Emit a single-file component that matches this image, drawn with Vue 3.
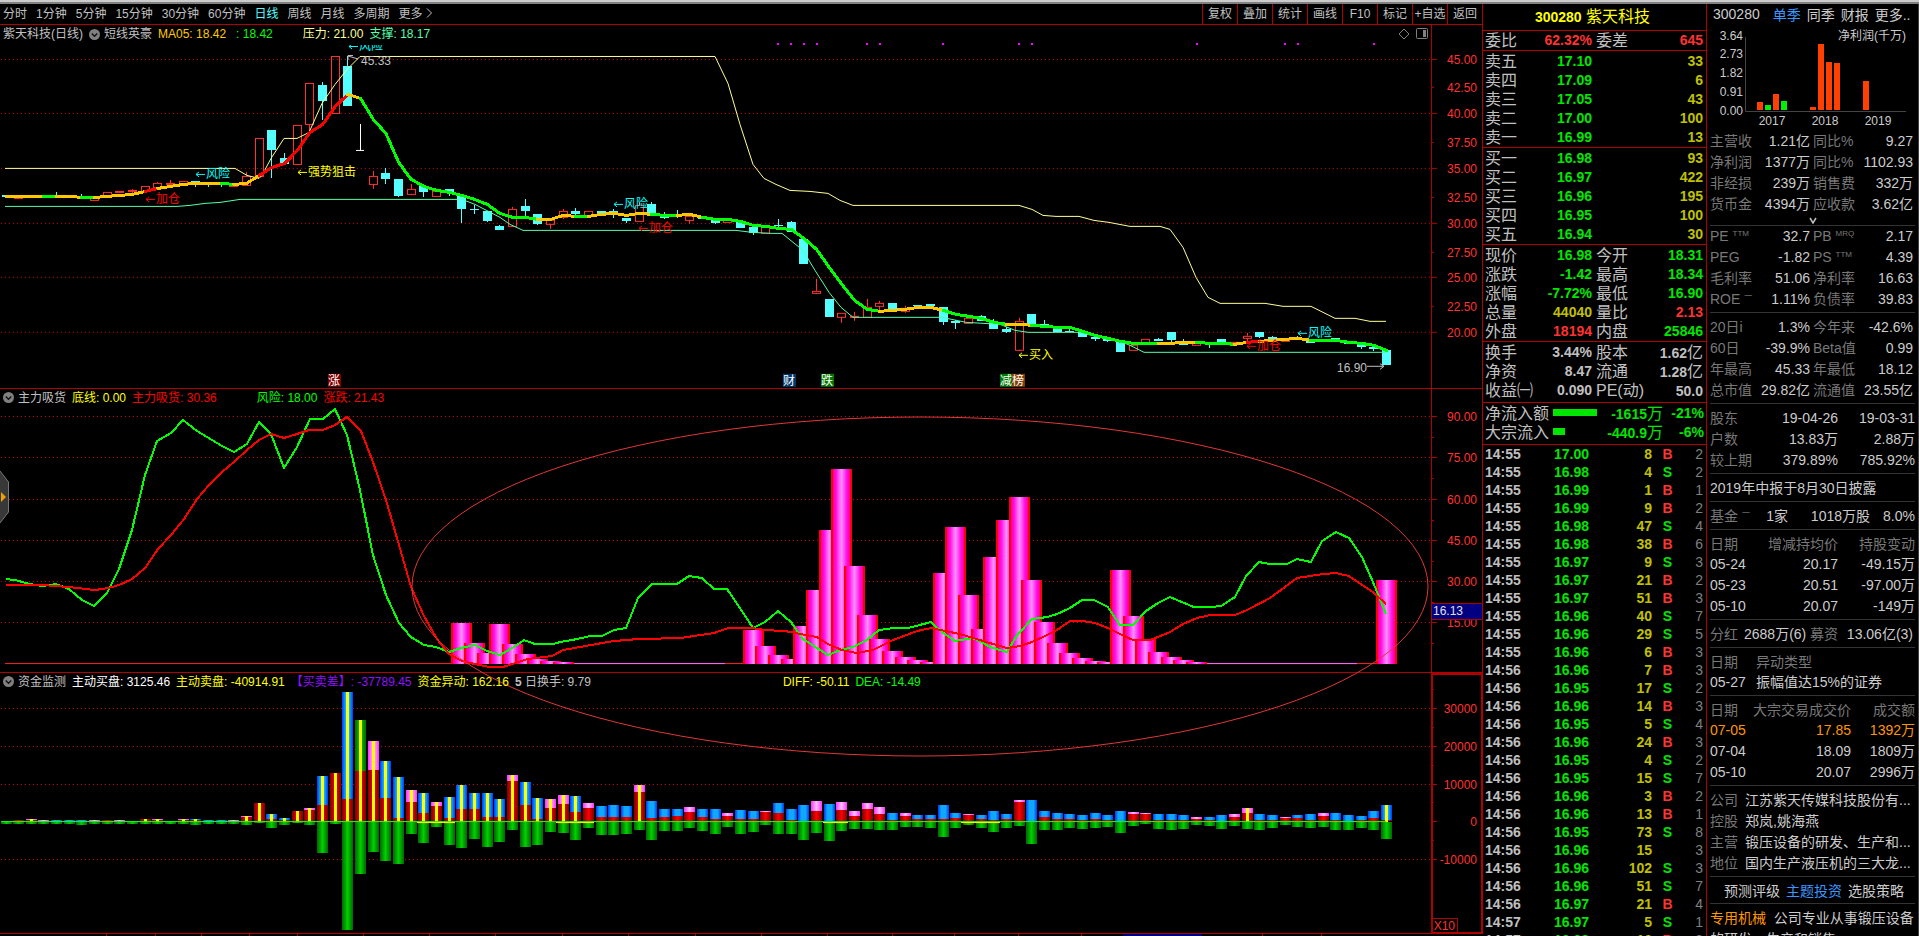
<script setup>
const periods = ['分时', '1分钟', '5分钟', '15分钟', '30分钟', '60分钟', '日线', '周线', '月线', '多周期']
const tools = ['复权', '叠加', '统计', '画线', 'F10', '标记', '+自选', '返回']

const px = (i) => 6 + 12.665 * i

// Candles: index, kind (u = rising, d = falling), body top, body bottom, wick top, wick bottom
const candles = [
  [0, 'd', 195, 197], [1, 'u', 196, 198, 196, 199], [4, 'd', 196, 197, 192, 197], [6, 'd', 196, 198, 194, 198],
  [7, 'u', 197, 200], [8, 'u', 192, 196], [9, 'u', 191, 192], [10, 'u', 190, 191, 189, 194], [11, 'u', 186, 191],
  [12, 'u', 183, 187, 182, 187], [13, 'u', 183, 184, 180, 187], [14, 'u', 181, 184], [15, 'd', 181, 183, 181, 187],
  [16, 'd', 182, 184, 182, 187], [17, 'd', 182, 184, 182, 187], [18, 'u', 185, 186], [19, 'u', 176, 185, 172, 185],
  [20, 'u', 138, 176], [21, 'd', 130, 150, 130, 178], [22, 'd', 158, 164, 153, 164], [23, 'u', 125, 164],
  [24, 'u', 83, 124, 83, 133], [25, 'd', 85, 101, 82, 120], [26, 'u', 56, 113], [27, 'd', 66, 106, 56, 106],
  [29, 'u', 176, 184, 171, 189], [30, 'd', 173, 179, 168, 184], [31, 'd', 179, 196, 179, 197], [32, 'u', 189, 194, 184, 195],
  [33, 'd', 186, 192, 186, 197], [34, 'u', 191, 196], [35, 'd', 189, 193, 189, 196], [36, 'd', 196, 209, 196, 223],
  [37, 'd', 209, 210, 205, 214], [38, 'd', 211, 221, 211, 222], [39, 'd', 226, 230, 225, 230], [40, 'u', 209, 226, 207, 227],
  [41, 'd', 206, 211, 199, 216], [42, 'd', 214, 224, 214, 225], [43, 'u', 220, 224, 220, 229], [44, 'u', 211, 217, 209, 219],
  [45, 'd', 211, 214, 208, 216], [46, 'u', 211, 216], [47, 'd', 211, 214], [48, 'd', 211, 215, 209, 218],
  [49, 'd', 218, 221, 218, 223], [50, 'u', 205, 221, 202, 221], [51, 'd', 204, 214, 202, 214], [52, 'd', 216, 218, 212, 219],
  [53, 'd', 215, 216, 210, 218], [54, 'u', 216, 220, 216, 224], [55, 'd', 217, 219], [56, 'd', 219, 223, 219, 224],
  [57, 'u', 220, 222], [58, 'd', 222, 228], [59, 'd', 227, 233, 227, 235], [60, 'u', 227, 233], [61, 'd', 225, 226, 219, 228],
  [62, 'd', 222, 232, 221, 232], [63, 'd', 239, 264], [64, 'u', 291, 293, 279, 294], [65, 'd', 299, 317],
  [66, 'u', 313, 317, 313, 323], [67, 'u', 316, 317, 312, 321], [68, 'u', 307, 317, 299, 317], [69, 'u', 303, 306, 301, 312],
  [70, 'd', 303, 310], [71, 'u', 308, 311, 306, 313], [72, 'd', 305, 306], [73, 'd', 304, 306], [74, 'd', 307, 322, 307, 325],
  [75, 'd', 321, 323, 320, 329], [76, 'u', 318, 323, 317, 323], [77, 'd', 316, 321, 315, 321], [78, 'd', 323, 329, 319, 329],
  [79, 'd', 329, 332, 327, 333], [80, 'u', 321, 350, 318, 351], [81, 'd', 314, 324], [82, 'd', 324, 326, 320, 326],
  [83, 'd', 329, 332], [84, 'd', 331, 332, 329, 332], [85, 'd', 332, 337], [86, 'd', 337, 339, 336, 341],
  [87, 'd', 339, 341, 338, 342], [88, 'd', 341, 352], [89, 'u', 345, 350], [90, 'u', 339, 343], [91, 'd', 339, 341, 338, 341],
  [92, 'd', 332, 340, 332, 342], [93, 'd', 341, 345, 339, 345], [94, 'u', 343, 345], [95, 'd', 343, 345, 343, 348],
  [96, 'd', 339, 343], [97, 'u', 342, 343], [98, 'u', 336, 338, 333, 342], [99, 'd', 332, 337, 332, 338],
  [100, 'd', 337, 340, 336, 340], [101, 'u', 340, 341], [102, 'd', 338, 339, 336, 340], [103, 'd', 340, 343],
  [105, 'd', 338, 341], [106, 'd', 341, 344], [107, 'd', 345, 347, 343, 349], [108, 'd', 347, 349, 345, 351],
  [109, 'd', 350, 365, 350, 365],
].map(([i, k, t, b, wt, wb]) => ({
  i, k, t, b, x: Math.floor(px(i)), wt: wt ?? t, wb: wb ?? b,
}))

const ma = [
  196, 196, 196, 196, 196, 196, 197, 197, 196, 195, 194, 191, 188, 186, 184, 183, 183, 183, 184, 183, 175, 167, 163, 150,
  132, 124, 106, 94, 98, 119, 133, 162, 179, 186, 190, 192, 195, 199, 204, 213, 217, 217, 219, 219, 215, 216, 216, 214,
  213, 215, 213, 214, 215, 215, 214, 217, 219, 219, 221, 225, 226, 228, 229, 238, 249, 267, 284, 300, 309, 311, 310, 309,
  307, 307, 310, 314, 316, 318, 322, 324, 324, 325, 326, 327, 327, 331, 335, 338, 341, 343, 343, 343, 343, 342, 342, 343,
  343, 344, 342, 341, 340, 339, 338, 340, 340, 340, 342, 343, 345, 350,
]
const maParts = [
  ['y', 0, 3], ['g', 3, 4], ['y', 4, 6], ['g', 6, 7], ['y', 7, 11], ['r', 11, 12], ['y', 12, 17], ['g', 17, 18],
  ['y', 18, 20], ['r', 20, 27], ['y', 27, 28], ['g', 28, 42], ['y', 42, 45], ['g', 45, 46], ['y', 46, 51], ['g', 51, 53],
  ['y', 53, 55], ['g', 55, 69], ['y', 69, 74], ['g', 74, 79], ['y', 79, 81], ['g', 81, 91], ['y', 91, 94], ['g', 94, 97],
  ['y', 97, 98], ['r', 98, 99], ['y', 99, 103], ['g', 103, 109],
].map(([c, a, b]) => ({
  c,
  pts: ma.slice(a, b + 1).map((y, n) => `${px(a + n)},${y + 0.5}`).join(' '),
}))

const pressure = '5,168 235,168 247,175 259,178 262,175 271,158 284,138 297,138 309,132 322,103 335,84 347,69 360,56 715,56 728,83 740,124 753,164 764,178 776,184 790,190 810,191 828,193 840,200 853,205 1019,205 1032,209 1043,215 1056,216 1079,216 1094,220 1109,222 1130,226 1160,226 1170,229 1183,247 1196,277 1208,297 1220,303 1265,303 1283,306 1311,306 1335,318 1355,318 1370,321 1386,321'
const support = '5,206 177,206 190,205 205,203 220,202 240,199 462,199 475,204 500,217 510,224 523,230 736,230 752,232 772,233 782,233 803,250 815,270 829,292 841,307 853,317 942,317 966,322 1000,324 1015,330 1028,332 1080,332 1095,336 1120,341 1130,345 1144,352 1386,352'
const signals = [777, 790, 803, 816, 866, 879, 942, 1018, 1031, 1196, 1284, 1297, 1373]
const axis1 = [[45, 59], [42.5, 87], [40, 113], [37.5, 142], [35, 168], [32.5, 197], [30, 223], [27.5, 252], [25, 277], [22.5, 306], [20, 332]]
const notes = [
  ['cyan', 195, 174, '风险'], ['pureRed', 145, 199, '加仓'], ['yellow', 297, 172, '强势狙击'],
  ['cyan', 613, 204, '风险'], ['pureRed', 638, 228, '加仓'], ['yellow', 1018, 355, '买入'],
  ['cyan', 1297, 333, '风险'], ['pureRed', 1246, 346, '加仓'],
]
const tags = [
  ['涨', 328, '#800000'], ['财', 783, '#003870'], ['跌', 821, '#007800'], ['减', 1000, '#007800'], ['榜', 1012, '#803c00'],
]

const axis2 = [[90, 416], [75, 457], [60, 499], [45, 540], [30, 581], [15, 622]]
const risk = '6,579 15,580 30,584 42,586 56,584 69,589 82,600 94,606 107,593 119,569 132,530 145,475 157,441 171,433 183,420 197,431 222,446 234,452 247,444 259,422 271,434 284,468 297,447 310,419 323,419 335,409 347,435 360,490 373,555 386,595 399,623 411,637 424,645 436,647 449,652 461,648 475,645 487,651 500,655 512,648 524,640 535,644 553,644 560,642 577,639 590,636 602,636 614,630 626,628 638,598 652,584 677,584 689,576 702,578 714,589 727,589 740,608 753,628 765,622 778,611 791,622 803,639 828,655 840,650 853,647 867,640 879,630 893,628 908,628 931,622 942,632 955,641 972,638 980,641 990,647 1007,652 1017,635 1032,619 1047,617 1057,614 1070,608 1082,600 1094,600 1108,607 1120,625 1133,625 1146,611 1158,603 1170,597 1194,607 1210,607 1221,606 1235,597 1246,576 1259,562 1270,564 1287,564 1297,559 1311,562 1322,541 1336,532 1349,538 1362,557 1373,582 1386,614'
const trend = '6,585 43,585 69,587 95,590 108,588 119,585 132,579 145,568 158,549 171,535 184,519 197,499 209,485 222,472 235,461 247,450 259,440 271,434 284,438 297,434 309,430 323,430 335,425 347,417 361,431 373,462 386,500 399,545 411,587 424,616 437,639 449,654 462,661 475,664 490,667 503,667 512,664 527,659 552,656 563,650 602,643 614,641 638,639 680,638 714,633 728,628 752,628 765,630 785,631 817,637 828,644 842,650 857,653 873,650 893,640 917,631 931,628 960,634 980,640 1007,648 1020,646 1032,642 1045,636 1057,630 1070,621 1083,621 1095,623 1108,628 1120,634 1133,640 1150,640 1170,632 1183,624 1197,618 1210,615 1235,615 1247,610 1270,598 1297,578 1323,574 1336,573 1349,576 1373,592 1386,604'
const inflow = [
  [36, 623], [37, 643], [38, 653], [39, 624], [40, 644], [41, 654], [42, 659], [43, 661], [44, 662],
  [59, 630], [60, 646], [61, 655], [62, 659], [63, 626], [64, 590], [65, 530], [66, 469], [67, 566], [68, 615], [69, 639],
  [70, 651], [71, 657], [72, 660], [73, 662], [74, 573], [75, 527], [76, 595], [77, 629], [78, 557], [79, 520], [80, 497],
  [81, 580], [82, 622], [83, 643], [84, 653], [85, 658], [86, 661], [87, 662], [88, 570], [89, 616], [90, 639], [91, 652],
  [92, 657], [93, 660], [94, 662], [109, 580],
]

const axis3 = [['30000', 708], ['20000', 746], ['10000', 784], ['0', 821], ['-10000', 859]]
// Money flow: top of bar, top of red part, upper colour, bottom of green part, yellow stripe
const flow = [
  [821, 821, 'b', 823], [820, 820, 'r', 823], [819, 820, 'p', 823, 1], [820, 821, 'p', 823], [820, 821, 'b', 823],
  [820, 821, 'b', 823], [820, 821, 'b', 824], [820, 821, 'p', 823], [820, 820, 'r', 823], [820, 821, 'p', 823],
  [821, 821, 'b', 823], [819, 819, 'r', 823, 1], [819, 820, 'p', 823, 1], [821, 821, 'b', 823], [819, 820, 'p', 823, 1],
  [819, 820, 'b', 824, 1], [820, 821, 'b', 823], [820, 821, 'b', 823], [820, 821, 'p', 823], [816, 817, 'p', 824, 1],
  [803, 803, 'r', 822, 1], [814, 819, 'b', 827, 1], [818, 820, 'b', 824, 1], [811, 811, 'r', 822, 1], [808, 810, 'p', 824, 1],
  [776, 805, 'b', 852, 1], [773, 773, 'r', 823, 1], [692, 799, 'b', 929, 1], [720, 771, 'g', 873, 1], [741, 770, 'p', 851, 1],
  [761, 798, 'b', 860, 1], [777, 818, 'b', 863, 1], [790, 802, 'p', 833, 1], [793, 813, 'b', 842, 1], [802, 806, 'p', 826, 1],
  [797, 818, 'b', 844, 1], [785, 809, 'b', 847, 1], [793, 809, 'b', 838, 1], [793, 817, 'b', 846, 1], [799, 817, 'b', 841, 1],
  [775, 781, 'p', 829, 1], [782, 805, 'b', 846, 1], [798, 819, 'b', 844, 1], [799, 808, 'p', 831, 1], [795, 804, 'p', 832, 1],
  [796, 812, 'b', 839, 1], [803, 808, 'p', 827], [806, 817, 'b', 834], [805, 817, 'b', 834], [806, 817, 'b', 833],
  [785, 792, 'p', 829, 1], [801, 818, 'b', 839], [809, 817, 'b', 830], [809, 816, 'b', 830], [807, 812, 'p', 827],
  [809, 817, 'b', 830], [809, 819, 'b', 833], [813, 816, 'p', 826], [810, 819, 'b', 833], [811, 819, 'b', 831],
  [811, 812, 'p', 824], [803, 813, 'b', 833], [809, 820, 'b', 833], [805, 821, 'b', 839], [801, 811, 'p', 832],
  [804, 821, 'b', 840], [802, 810, 'p', 830], [811, 816, 'p', 828], [803, 809, 'p', 828], [807, 814, 'p', 829],
  [813, 820, 'b', 829], [813, 816, 'p', 826], [815, 819, 'b', 826], [815, 819, 'b', 827], [805, 819, 'b', 836],
  [813, 818, 'b', 827], [814, 815, 'p', 824], [815, 819, 'b', 827], [811, 820, 'b', 831], [814, 819, 'b', 827],
  [800, 802, 'p', 825], [800, 821, 'b', 843], [811, 817, 'b', 829], [813, 819, 'b', 829], [814, 819, 'b', 827],
  [815, 820, 'b', 828], [813, 819, 'b', 827], [815, 820, 'b', 826], [811, 821, 'b', 832], [812, 814, 'p', 825],
  [813, 814, 'p', 823], [814, 820, 'b', 828], [814, 820, 'b', 829], [815, 820, 'b', 828], [817, 819, 'p', 824],
  [817, 820, 'b', 825], [815, 821, 'b', 828], [814, 817, 'p', 825], [808, 813, 'p', 828, 1], [814, 820, 'b', 829],
  [815, 820, 'b', 827], [817, 818, 'p', 824], [815, 818, 'b', 826], [814, 820, 'b', 827], [813, 816, 'p', 826],
  [813, 820, 'b', 829], [815, 821, 'b', 829], [816, 820, 'b', 827], [811, 818, 'b', 829], [805, 820, 'b', 838, 1],
].map(([top, mid, kind, bottom, stripe], i) => ({ x: Math.floor(px(i)) - 5, top, mid, kind, bottom, stripe }))
const warnings = [[417, 455], [556, 594], [823, 848], [961, 1000]]
const footTicks = [106, 155, 201, 249, 297, 363, 429, 495, 562, 628, 695, 761, 827, 892, 954, 1018, 1081, 1262, 1321]

const sells = [['卖五', '17.10', 33], ['卖四', '17.09', 6], ['卖三', '17.05', 43], ['卖二', '17.00', 100], ['卖一', '16.99', 13]]
const buys = [['买一', '16.98', 93], ['买二', '16.97', 422], ['买三', '16.96', 195], ['买四', '16.95', 100], ['买五', '16.94', 30]]
const quotes = [
  ['现价', '16.98', 'green', '今开', '18.31', 'green'],
  ['涨跌', '-1.42', 'green', '最高', '18.34', 'green'],
  ['涨幅', '-7.72%', 'green', '最低', '16.90', 'green'],
  ['总量', '44040', 'olive', '量比', '2.13', 'red'],
  ['外盘', '18194', 'red', '内盘', '25846', 'green'],
]
const shares = [['换手', '3.44%', '股本', '1.62', '亿'], ['净资', '8.47', '流通', '1.28', '亿'], ['收益㈠', '0.090', 'PE(动)', '50.0', '']]
const netFlow = [['净流入额', 44, '-1615', '-21%'], ['大宗流入', 12, '-440.9', '-6%']]
const ticks = [
  ['14:55', '17.00', 8, 'B', 2], ['14:55', '16.98', 4, 'S', 2], ['14:55', '16.99', 1, 'B', 1], ['14:55', '16.99', 9, 'B', 2],
  ['14:55', '16.98', 47, 'S', 4], ['14:55', '16.98', 38, 'B', 6], ['14:55', '16.97', 9, 'S', 3], ['14:55', '16.97', 21, 'B', 2],
  ['14:55', '16.97', 51, 'B', 3], ['14:55', '16.96', 40, 'S', 7], ['14:55', '16.96', 29, 'S', 5], ['14:55', '16.96', 6, 'B', 3],
  ['14:56', '16.96', 7, 'B', 3], ['14:56', '16.95', 17, 'S', 2], ['14:56', '16.96', 14, 'B', 3], ['14:56', '16.95', 5, 'S', 4],
  ['14:56', '16.96', 24, 'B', 3], ['14:56', '16.95', 4, 'S', 2], ['14:56', '16.95', 15, 'S', 7], ['14:56', '16.96', 3, 'B', 2],
  ['14:56', '16.96', 13, 'B', 1], ['14:56', '16.95', 73, 'S', 8], ['14:56', '16.96', 15, '', 3], ['14:56', '16.96', 102, 'S', 3],
  ['14:56', '16.96', 51, 'S', 7], ['14:56', '16.97', 21, 'B', 4], ['14:57', '16.97', 5, 'S', 1], ['14:57', '16.98', 10, 'B', 3],
]

const profitAxis = [['3.64', 36], ['2.73', 54], ['1.82', 73], ['0.91', 92], ['0.00', 111]]
const profitBars = [
  [1757, 102, 'o'], [1765, 105, 'g'], [1773, 94, 'o'], [1781, 101, 'g'],
  [1810, 107, 'o'], [1818, 44, 'o'], [1826, 62, 'o'], [1834, 63, 'o'], [1863, 81, 'o'],
]
const finance = [
  ['主营收', '1.21亿', '同比%', '9.27'], ['净利润', '1377万', '同比%', '1102.93'],
  ['非经损', '239万', '销售费', '332万'], ['货币金', '4394万', '应收款', '3.62亿'],
]
const ratios = [
  ['PE', '32.7', 'PB', '2.17', 'TTM', 'MRQ'], ['PEG', '-1.82', 'PS', '4.39', '', 'TTM'],
  ['毛利率', '51.06', '净利率', '16.63'], ['ROE', '1.11%', '负债率', '39.83', '一'],
]
const range = [
  ['20日i', '1.3%', '今年来', '-42.6%'], ['60日', '-39.9%', 'Beta值', '0.99'],
  ['年最高', '45.33', '年最低', '18.12'], ['总市值', '29.82亿', '流通值', '23.55亿'],
]
const holders = [['股东', '19-04-26', '19-03-31'], ['户数', '13.83万', '2.88万'], ['较上期', '379.89%', '785.92%']]
const changes = [['05-24', '20.17', '-49.15万'], ['05-23', '20.51', '-97.00万'], ['05-10', '20.07', '-149万']]
const blocks = [['07-05', '17.85', '1392万'], ['07-04', '18.09', '1809万'], ['05-10', '20.07', '2996万']]
const company = [
  ['公司', '江苏紫天传媒科技股份有...'], ['控股', '郑岚,姚海燕'],
  ['主营', '锻压设备的研发、生产和...'], ['地位', '国内生产液压机的三大龙...'],
]
</script>

<template>
  <div class="app">
    <div class="strip"></div>
    <div class="body">
      <main class="left">
        <nav class="toolbar">
          <div class="periods">
            <button v-for="p in periods" :key="p" :class="{ active: p === '日线' }">{{ p }}</button>
            <button class="more">更多
              <svg width="7" height="10" viewBox="0 0 7 10"><path d="M1 0.5 L5.5 5 L1 9.5" fill="none" stroke="#c0c0c0" /></svg>
            </button>
          </div>
          <div class="tools">
            <button v-for="t in tools" :key="t">{{ t }}</button>
          </div>
        </nav>

        <div class="charts">
          <section class="pane p1">
            <header class="legend">
              <span>紫天科技(日线)</span>
              <svg class="drop" viewBox="0 0 12 12"><circle cx="6" cy="6" r="6" fill="#808080" /><path d="M3 5 L6 8 L9 5" fill="none" stroke="#111" stroke-width="1.5" /></svg>
              <span>短线英豪</span>
              <span class="gold">MA05: 18.42</span>
              <span class="lime ml4">: 18.42</span>
              <span class="pale ml24">压力: 21.00</span>
              <span class="mint">支撑: 18.17</span>
              <svg class="corner" width="32" height="14" viewBox="0 0 32 14">
                <path d="M6 2 L11 7 L6 12 L1 7 Z" fill="none" stroke="#808080" />
                <rect x="18.5" y="1.5" width="11" height="10" rx="1" fill="none" stroke="#808080" />
                <rect x="25" y="3" width="3" height="7" fill="#808080" />
              </svg>
            </header>
            <svg class="plot" viewBox="0 25 1483 364" preserveAspectRatio="none">
              <g class="grid">
                <line v-for="n in [0, 2, 4, 6, 8, 10]" :key="n" x1="1" x2="1431" :y1="axis1[n][1] + 0.5" :y2="axis1[n][1] + 0.5" />
              </g>
              <g class="axis">
                <line x1="1431.5" x2="1431.5" y1="25" y2="389" />
                <line v-for="(a, n) in axis1" :key="n" x1="1432" :x2="n % 2 ? 1434 : 1437" :y1="a[1] + 0.5" :y2="a[1] + 0.5" />
                <text v-for="(a, n) in axis1" :key="'t' + n" x="1477" :y="a[1] + 5">{{ a[0].toFixed(2) }}</text>
              </g>
              <rect v-for="s in signals" :key="s" :x="s" y="43" width="2" height="2" fill="#ff00ff" shape-rendering="crispEdges" />
              <g v-for="c in candles" :key="c.i" :class="c.k" shape-rendering="crispEdges">
                <template v-if="c.k === 'd'">
                  <rect :x="c.x" :y="c.wt" width="1" :height="c.wb - c.wt" />
                  <rect :x="c.x - 4" :y="c.t" width="9" :height="c.b - c.t" />
                </template>
                <template v-else>
                  <line :x1="c.x + 0.5" :x2="c.x + 0.5" :y1="c.wt" :y2="c.t" />
                  <line :x1="c.x + 0.5" :x2="c.x + 0.5" :y1="c.b" :y2="c.wb" />
                  <rect :x="c.x - 3.5" :y="c.t + 0.5" width="8" :height="c.b - c.t" />
                </template>
              </g>
              <path d="M360.5 124 V150.5 M356 150.5 H364" stroke="#fff" fill="none" shape-rendering="crispEdges" />
              <polyline class="thin" :points="pressure" stroke="#ffff99" transform="translate(0 .5)" />
              <polyline class="thin" :points="support" stroke="#55ffaa" transform="translate(0 .5)" />
              <polyline v-for="(m, n) in maParts" :key="n" class="ma" :class="m.c" :points="m.pts" />
              <g v-for="(n, k) in notes" :key="'n' + k" class="note" :class="n[0]">
                <path :d="`M${n[1] + 10} ${n[2] + 0.5} h-9 M${n[1] + 4} ${n[2] - 2} l-3 2.5 l3 2.5`" />
                <text :x="n[1] + 11" :y="n[2] + 4">{{ n[3] }}</text>
              </g>
              <clipPath id="under-legend"><rect x="340" y="45" width="60" height="20" /></clipPath>
              <g class="note cyan" clip-path="url(#under-legend)">
                <path d="M358 46.5 h-9 M352 44 l-3 2.5 l3 2.5" />
                <text x="359" y="50">风险</text>
              </g>
              <g class="note grey">
                <path d="M358 59 L348 56 M348 60 V55.5 H353" />
                <text x="361" y="65">45.33</text>
                <path d="M1367 366.5 H1384 M1380 364 l4 2.5 l-4 3" />
                <text x="1337" y="372">16.90</text>
              </g>
              <g v-for="t in tags" :key="t[0]" class="tag">
                <rect :x="t[1]" y="374" width="13" height="13" :fill="t[2]" />
                <text :x="t[1]" y="385">{{ t[0] }}</text>
              </g>
            </svg>
          </section>

          <section class="pane p2">
            <header class="legend">
              <svg class="drop" viewBox="0 0 12 12"><circle cx="6" cy="6" r="6" fill="#808080" /><path d="M3 5 L6 8 L9 5" fill="none" stroke="#111" stroke-width="1.5" /></svg>
              <span>主力吸货</span>
              <span class="yellow">底线: 0.00</span>
              <span class="pureRed">主力吸货: 30.36</span>
              <span class="lime ml34">风险: 18.00</span>
              <span class="pureRed">涨跌: 21.43</span>
            </header>
            <svg class="plot" viewBox="0 389 1483 284" preserveAspectRatio="none">
              <defs>
                <linearGradient id="pinkBar">
                  <stop offset="0" stop-color="#ff0000" /><stop offset=".1" stop-color="#ff0000" />
                  <stop offset=".11" stop-color="#ff0099" /><stop offset=".25" stop-color="#ff10e8" />
                  <stop offset=".5" stop-color="#ff90ff" /><stop offset=".75" stop-color="#ff10e8" />
                  <stop offset=".89" stop-color="#ff0099" /><stop offset=".9" stop-color="#ff0000" />
                </linearGradient>
              </defs>
              <g class="grid">
                <line v-for="a in axis2" :key="a[0]" x1="1" x2="1431" :y1="a[1] + 0.5" :y2="a[1] + 0.5" />
              </g>
              <g class="axis">
                <line x1="1431.5" x2="1431.5" y1="389" y2="673" />
                <template v-for="a in axis2" :key="a[0]">
                  <line x1="1432" x2="1437" :y1="a[1] + 0.5" :y2="a[1] + 0.5" />
                  <line x1="1432" x2="1434" :y1="a[1] + 21.5" :y2="a[1] + 21.5" />
                  <text x="1477" :y="a[1] + 5">{{ a[0].toFixed(2) }}</text>
                </template>
              </g>
              <rect x="5" y="663" width="1381" height="1" fill="#ff2020" />
              <rect x="570" y="663" width="155" height="1" fill="#ff66ff" />
              <rect x="1190" y="663" width="167" height="1" fill="#ff66ff" />
              <rect v-for="b in inflow" :key="b[0]" :x="Math.floor(px(b[0])) - 10" :y="b[1]" width="21" :height="664 - b[1]" fill="url(#pinkBar)" shape-rendering="crispEdges" />
              <polyline class="osc" :points="risk" stroke="#00ff00" />
              <polyline class="osc" :points="trend" stroke="#ff0000" />
              <rect x="1431.5" y="603.5" width="51" height="16" fill="#000080" stroke="#b00000" />
              <text class="cursor" x="1433" y="615">16.13</text>
            </svg>
          </section>

          <section class="pane p3">
            <header class="legend">
              <svg class="drop" viewBox="0 0 12 12"><circle cx="6" cy="6" r="6" fill="#808080" /><path d="M3 5 L6 8 L9 5" fill="none" stroke="#111" stroke-width="1.5" /></svg>
              <span>资金监测</span>
              <span class="white">主动买盘: 3125.46</span>
              <span class="yellow">主动卖盘: -40914.91</span>
              <span class="violet">【买卖差】: -37789.45</span>
              <span class="yellow">资金异动: 162.16</span>
              <span><b>5</b> 日换手: 9.79</span>
              <span class="yellow ml186">DIFF: -50.11</span>
              <span class="lime">DEA: -14.49</span>
            </header>
            <svg class="plot" viewBox="0 673 1483 261" preserveAspectRatio="none">
              <defs>
                <linearGradient id="fb"><stop offset="0" stop-color="#0038ff" /><stop offset=".3" stop-color="#10a8ff" /><stop offset=".7" stop-color="#10a8ff" /><stop offset="1" stop-color="#0038ff" /></linearGradient>
                <linearGradient id="fp"><stop offset="0" stop-color="#ff30ff" /><stop offset=".5" stop-color="#ffc0ff" /><stop offset="1" stop-color="#ff30ff" /></linearGradient>
                <linearGradient id="fr"><stop offset="0" stop-color="#800000" /><stop offset=".5" stop-color="#ff0000" /><stop offset="1" stop-color="#800000" /></linearGradient>
                <linearGradient id="fg"><stop offset="0" stop-color="#006800" /><stop offset=".5" stop-color="#00d000" /><stop offset="1" stop-color="#006800" /></linearGradient>
              </defs>
              <g class="grid">
                <line v-for="n in [0, 1, 2, 4]" :key="n" x1="1" x2="1431" :y1="axis3[n][1] + 0.5" :y2="axis3[n][1] + 0.5" />
              </g>
              <g class="axis">
                <rect x="1432" y="674" width="50" height="259" fill="none" stroke-width="2" />
                <path d="M1432 918.5 H1457.5 V933" fill="none" />
                <template v-for="a in axis3" :key="a[0]">
                  <line x1="1432" x2="1437" :y1="a[1] + 0.5" :y2="a[1] + 0.5" />
                  <line x1="1432" x2="1434" :y1="a[1] - 18.5" :y2="a[1] - 18.5" />
                  <text x="1477" :y="a[1] + 5">{{ a[0] }}</text>
                </template>
                <text x="1455" y="930">X10</text>
              </g>
              <g v-for="(f, i) in flow" :key="i" shape-rendering="crispEdges">
                <rect :x="f.x" y="822" width="11" :height="f.bottom - 822 + 1" fill="url(#fg)" />
                <rect :x="f.x" :y="f.top" width="11" :height="f.mid - f.top" :fill="`url(#f${f.kind})`" />
                <rect :x="f.x" :y="f.mid" width="11" :height="821 - f.mid" fill="url(#fr)" />
                <rect v-if="f.stripe" :x="f.x + 4" :y="f.top" width="3" :height="822 - f.top" fill="#ffff00" />
              </g>
              <rect x="1" y="821" width="1385" height="1" fill="#20ff20" />
              <rect v-for="w in warnings" :key="w[0]" :x="w[0]" y="822" :width="w[1] - w[0]" height="1" fill="#ffff00" />
            </svg>
          </section>

          <svg class="overlay" viewBox="0 25 1483 909" preserveAspectRatio="none">
            <ellipse cx="920" cy="586.5" rx="508" ry="169.5" fill="none" stroke="#e03838" />
          </svg>
          <button class="handle" aria-label="展开">
            <svg width="10" height="56" viewBox="0 0 10 56">
              <path d="M0 1 L8.5 12 V42 L0 53" fill="#383838" stroke="#777" />
              <path d="M1 22 L6 27 L1 32 Z" fill="#f0a000" />
            </svg>
          </button>
        </div>
        <svg class="foot" viewBox="0 934 1483 2" preserveAspectRatio="none">
          <rect v-for="t in footTicks" :key="t" :x="t" y="934" width="1" height="2" fill="#b00000" />
          <rect x="1123" y="934" width="79" height="2" fill="#000080" />
        </svg>
      </main>

      <aside class="quote">
        <h1><b>300280</b> 紫天科技</h1>
        <div class="box tight">
          <div class="kv"><span>委比</span><b class="red">62.32%</b><span>委差</span><b class="red">645</b></div>
        </div>
        <table v-for="(side, k) in [sells, buys]" :key="k" class="box">
          <tbody>
            <tr v-for="r in side" :key="r[0]" class="kv">
              <th>{{ r[0] }}</th><td class="green">{{ r[1] }}</td><td></td><td class="olive">{{ r[2] }}</td>
            </tr>
          </tbody>
        </table>
        <div class="box">
          <div v-for="q in quotes" :key="q[0]" class="kv">
            <span>{{ q[0] }}</span><b :class="q[2]">{{ q[1] }}</b><span>{{ q[3] }}</span><b :class="q[5]">{{ q[4] }}</b>
          </div>
        </div>
        <div class="box loose">
          <div v-for="q in shares" :key="q[0]" class="kv">
            <span>{{ q[0] }}</span><b>{{ q[1] }}</b><span>{{ q[2] }}</span><b>{{ q[3] }}<i>{{ q[4] }}</i></b>
          </div>
        </div>
        <div class="box loose">
          <div v-for="n in netFlow" :key="n[0]" class="nf">
            <span>{{ n[0] }}</span><span class="bar" :style="{ width: n[1] + 'px' }"></span>
            <b class="green">{{ n[2] }}<i>万</i></b><b class="green">{{ n[3] }}</b>
          </div>
        </div>
        <div class="ticks">
          <table>
            <tbody>
              <tr v-for="(t, n) in ticks" :key="n">
                <td class="time">{{ t[0] }}</td><td class="green">{{ t[1] }}</td><td class="olive">{{ t[2] }}</td>
                <td :class="t[3] === 'B' ? 'red' : 'green'">{{ t[3] }}</td><td class="dim">{{ t[4] }}</td>
              </tr>
            </tbody>
          </table>
        </div>
      </aside>

      <aside class="info">
        <nav class="tabs">
          <span>300280</span><button class="blue">单季</button><button>同季</button><button>财报</button><button>更多..</button>
        </nav>
        <svg class="profit" viewBox="1707 26 211 105">
          <path d="M1745.5 37 V111.5 H1906" fill="none" stroke="#444" />
          <text v-for="a in profitAxis" :key="a[0]" x="1743" :y="a[1] + 4" text-anchor="end">{{ a[0] }}</text>
          <text x="1906" y="40" text-anchor="end">净利润(千万)</text>
          <rect v-for="b in profitBars" :key="b[0]" :x="b[0]" :y="b[1]" width="6" :height="110 - b[1]" :fill="b[2] === 'o' ? '#ff4000' : '#00f000'" />
          <text x="1772" y="125" text-anchor="middle">2017</text>
          <text x="1825" y="125" text-anchor="middle">2018</text>
          <text x="1878" y="125" text-anchor="middle">2019</text>
        </svg>
        <section class="flush">
          <div v-for="(r, k) in finance" :key="k" class="four"><i>{{ r[0] }}</i><b>{{ r[1] }}</b><i>{{ r[2] }}</i><b>{{ r[3] }}</b></div>
          <button class="fold" aria-label="收起"><svg width="8" height="7" viewBox="0 0 8 7"><path d="M1 1 L4 6 L7 1" fill="none" stroke="#c0c0c0" stroke-width="1.5" /></svg></button>
        </section>
        <section class="top0">
          <div v-for="r in ratios" :key="r[0]" class="four">
            <i>{{ r[0] }} <sup>{{ r[4] }}</sup></i><b>{{ r[1] }}</b><i>{{ r[2] }} <sup>{{ r[5] }}</sup></i><b>{{ r[3] }}</b>
          </div>
        </section>
        <section>
          <div v-for="r in range" :key="r[0]" class="four"><i>{{ r[0] }}</i><b>{{ r[1] }}</b><i>{{ r[2] }}</i><b>{{ r[3] }}</b></div>
        </section>
        <section>
          <div v-for="r in holders" :key="r[0]" class="three"><i>{{ r[0] }}</i><b>{{ r[1] }}</b><b>{{ r[2] }}</b></div>
        </section>
        <section><p class="line">2019年中报于8月30日披露</p></section>
        <section>
          <div class="fund"><i>基金 <sup>一</sup></i><b>1家</b><b>1018万股</b><b>8.0%</b></div>
        </section>
        <section>
          <table>
            <thead><tr class="three"><th>日期</th><th>增减持均价</th><th>持股变动</th></tr></thead>
            <tbody><tr v-for="r in changes" :key="r[0]" class="three"><td>{{ r[0] }}</td><td>{{ r[1] }}</td><td>{{ r[2] }}</td></tr></tbody>
          </table>
        </section>
        <section>
          <div class="bonus"><i>分红</i><b>2688万(6)</b><i>募资</i><b>13.06亿(3)</b></div>
        </section>
        <section>
          <table>
            <thead><tr class="two"><th>日期</th><th>异动类型</th></tr></thead>
            <tbody><tr class="two"><td>05-27</td><td>振幅值达15%的证券</td></tr></tbody>
          </table>
        </section>
        <section>
          <table>
            <thead><tr class="deal"><th>日期</th><th>大宗交易成交价</th><th>成交额</th></tr></thead>
            <tbody><tr v-for="(r, k) in blocks" :key="r[0]" class="deal" :class="{ hot: k === 0 }"><td>{{ r[0] }}</td><td>{{ r[1] }}</td><td>{{ r[2] }}</td></tr></tbody>
          </table>
        </section>
        <section>
          <div v-for="r in company" :key="r[0]" class="corp"><i>{{ r[0] }}</i><span>{{ r[1] }}</span></div>
        </section>
        <section class="views">
          <button>预测评级</button><button class="blue">主题投资</button><button>选股策略</button>
        </section>
        <section class="last"><p><span class="hot">专用机械</span>&nbsp; 公司专业从事锻压设备的研发、生产和销售。</p></section>
      </aside>
    </div>
  </div>
</template>

<style>
html,
body {
  background: #000;
  overflow: hidden;
}
</style>

<style scoped>
.app {
  height: 100vh;
  display: flex;
  flex-direction: column;
  background: #000;
  color: #c0c0c0;
  font: 12px/18px "Liberation Sans", "Noto Sans CJK SC", sans-serif;
  overflow: hidden;
}
button {
  background: none;
  border: 0;
  padding: 0;
  color: inherit;
  font: inherit;
  cursor: pointer;
  white-space: nowrap;
}
i { font-style: normal; }
p, h1 { margin: 0; }
table { border-collapse: collapse; border-spacing: 0; }
th, td { padding: 0; font-weight: inherit; text-align: left; }
.strip {
  flex: none;
  height: 2px;
  background: #cccccc;
  border-bottom: 2px solid #808080;
}
.body {
  flex: 1;
  min-height: 0;
  display: grid;
  grid-template-columns: minmax(0, 1fr) 224px 212px;
}
.left {
  display: flex;
  flex-direction: column;
  min-height: 0;
}
.toolbar {
  flex: none;
  height: 20px;
  display: flex;
  justify-content: space-between;
  border-bottom: 1px solid #b00000;
  border-right: 1px solid #b00000;
}
.periods {
  display: flex;
  gap: 9px;
  padding-left: 3px;
}
.periods .active { color: #55ffff; }
.tools { display: flex; }
.tools button {
  width: 35px;
  border-left: 1px solid #b00000;
}
.charts {
  flex: 1;
  min-height: 0;
  position: relative;
  display: flex;
  flex-direction: column;
}
.pane {
  position: relative;
  min-height: 0;
  box-sizing: border-box;
  border-bottom: 1px solid #b00000;
  border-right: 1px solid #b00000;
}
.p1 { flex: 364 1 0; }
.p2 { flex: 284 1 0; }
.p3 { flex: 261 1 0; }
.plot, .overlay {
  position: absolute;
  left: 0;
  top: 0;
  width: calc(100% + 1px);
  height: calc(100% + 1px);
  display: block;
}
.overlay {
  width: 100%;
  height: 100%;
  pointer-events: none;
}
.legend {
  position: relative;
  z-index: 1;
  display: flex;
  align-items: center;
  gap: 6px;
  height: 18px;
  padding-left: 3px;
  white-space: nowrap;
}
.drop { width: 11px; height: 11px; flex: none; }
.drop + span { margin-left: -2px; }
.corner { margin-left: auto; margin-right: 52px; }
.ml4 { margin-left: 4px; }
.ml24 { margin-left: 24px; }
.ml34 { margin-left: 34px; }
.ml186 { margin-left: 186px; }
.gold { color: #ffc800; }
.lime { color: #00ff00; }
.pale { color: #ffff99; }
.mint { color: #55ffaa; }
.yellow { color: #ffff00; }
.pureRed { color: #ff0000; }
.white { color: #ffffff; }
.violet { color: #9010ff; }
.red { color: #ff3232; }
.green { color: #00e600; }
.olive { color: #c0c000; }
.blue { color: #3c96ff; }
.hot { color: #ff9600; }
.grid line {
  stroke: #c80000;
  stroke-dasharray: 1 3;
  shape-rendering: crispEdges;
}
.axis line, .axis path, .axis rect {
  stroke: #b00000;
  shape-rendering: crispEdges;
}
.axis text { fill: #ff3232; text-anchor: end; }
.u line, .u rect { stroke: #ff3232; fill: none; }
.d rect { fill: #55ffff; }
.thin, .osc, .ma { fill: none; stroke-linejoin: round; shape-rendering: crispEdges; }
.thin { stroke-width: 1; }
.osc { stroke-width: 2; }
.ma { stroke-width: 3; stroke-linecap: square; }
.ma.y { stroke: #ffc800; }
.ma.g { stroke: #00ff00; }
.ma.r { stroke: #ff0000; }
.note text { fill: currentColor; }
.note path { fill: none; stroke: currentColor; }
.cyan { color: #00ffff; }
.grey { color: #c0c0c0; }
.tag text { fill: #ffffff; }
.cursor { fill: #e0e0e0; }
.handle {
  position: absolute;
  left: 0;
  top: 49%;
  height: 56px;
}
.handle svg { display: block; }
.foot { flex: none; width: 100%; height: 2px; display: block; }

.quote {
  display: flex;
  flex-direction: column;
  min-height: 0;
  overflow: hidden;
  border-right: 1px solid #b00000;
  font-size: 16px;
  line-height: 19px;
}
.quote b, .quote td { font-size: 14px; font-weight: 700; }
.quote h1 {
  font-size: 16px;
  font-weight: 400;
  line-height: 26px;
  text-align: center;
  padding-right: 4px;
  color: #ffff00;
  border-bottom: 1px solid #b00000;
}
.box {
  display: block;
  flex: none;
  padding: 1px 0 0 2px;
  border-bottom: 1px solid #b00000;
}
.box tbody { display: block; }
.tight { padding-top: 0; }
.loose { padding-bottom: 2px; }
.kv {
  display: grid;
  grid-template-columns: 44px 63px 4px 52px 1fr;
  height: 19px;
  padding-right: 3px;
  white-space: nowrap;
}
.kv > :nth-child(2) { text-align: right; }
.kv > :nth-child(3) { grid-column: 4; }
.kv > :nth-child(4) { text-align: right; }
.quote b i { font-size: 16px; font-weight: 400; }
.nf {
  display: grid;
  grid-template-columns: 68px 1fr 66px 41px;
  height: 19px;
  padding-right: 2px;
  white-space: nowrap;
}
.nf b { text-align: right; }
.nf .bar {
  height: 7px;
  margin-top: 5px;
  background: #00e600;
  justify-self: start;
}
.ticks { flex: 1; min-height: 0; overflow: hidden; }
.ticks table, .ticks tbody { display: block; }
.ticks tr {
  display: grid;
  grid-template-columns: 50px 54px 63px 31px 1fr;
  height: 18px;
  line-height: 18px;
  padding: 0 3px 0 2px;
}
.ticks td { text-align: right; }
.ticks .time { text-align: left; }
.ticks td:nth-child(4) { text-align: center; }
.quote .ticks .dim { color: #808080; font-weight: 400; }

.info {
  min-height: 0;
  overflow: hidden;
  box-sizing: border-box;
  border-right: 1px solid #404040;
  font-size: 14px;
  line-height: 21px;
  color: #cccccc;
}
.tabs {
  display: flex;
  gap: 6px;
  height: 22px;
  padding-left: 6px;
}
.tabs span { margin-right: 7px; }
.profit { display: block; width: 100%; height: 105px; font-size: 12px; }
.profit text { fill: #cccccc; }
.info section {
  margin: 0 3px;
  padding: 4px 0 2px;
  border-bottom: 1px solid #333333;
}
.info .flush { padding: 0; }
.info .top0 { padding-top: 0; }
.info b { font-weight: 400; }
.info i, .info th { color: #787878; }
.info table, .info tbody, .info thead { display: block; }
.info thead { line-height: 20px; }
.info sup {
  font-size: 8px;
  line-height: 8px;
  vertical-align: 5px;
}
.four, .three, .two, .deal, .fund, .bonus, .corp {
  display: grid;
  white-space: nowrap;
}
.four { grid-template-columns: 42px 58px 3px 48px 1fr; padding-right: 2px; }
.four > :nth-child(3) { grid-column: 4; }
.four b { justify-self: end; }
.three { grid-template-columns: 46px 82px 1fr; }
.three > :not(:first-child), .deal > :not(:first-child) { text-align: right; }
.two { grid-template-columns: 46px 1fr; }
.deal { grid-template-columns: 40px 101px 1fr; }
.deal.hot { color: #ff9600; }
.fund { grid-template-columns: 50px 28px 82px 1fr; }
.fund b { text-align: right; }
.bonus { grid-template-columns: 34px 66px 32px 1fr; padding-right: 2px; }
.bonus b:last-child { text-align: right; }
.corp { grid-template-columns: 35px 1fr; }
.fold {
  display: flex;
  justify-content: center;
  align-items: center;
  width: 100%;
  height: 10px;
}
.info .views {
  display: flex;
  justify-content: center;
  gap: 6px;
  padding-left: 3px;
  line-height: 20px;
}
.info .last { border: 0; padding-bottom: 0; }
</style>
